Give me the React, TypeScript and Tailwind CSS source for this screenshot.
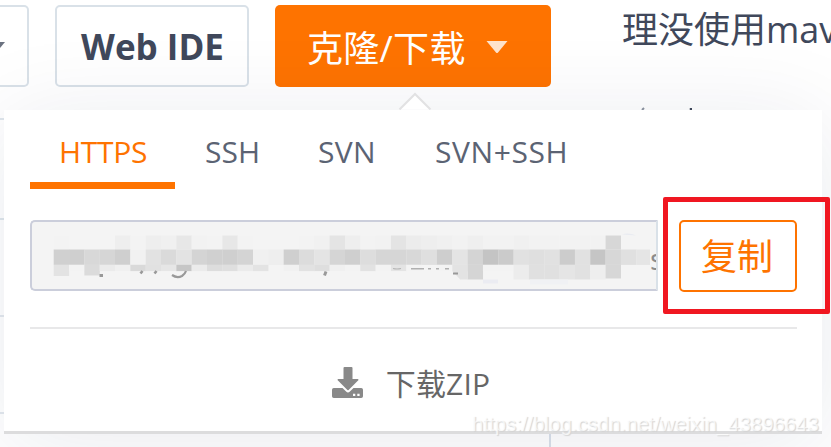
import React from "react";

// Each row: y, height and the grey level of every cell, left to right (0 = clear).
const CELL = 15.33;
const MOSAIC: { y: number; h: number; cells: number[] }[] = [
  {
    y: 15,
    h: 14,
    cells: [243, 0, 0, 0, 238, 243, 238, 240, 231, 242, 243, 231, 243, 0, 0, 0, 243, 241, 228, 238, 243, 242, 228, 236, 238, 240, 242, 239, 242, 242, 240, 242, 242, 242, 242, 242, 215, 0, 0],
  },
  {
    y: 29,
    h: 15.3,
    cells: [208, 207, 216, 214, 207, 241, 226, 218, 227, 212, 208, 207, 212, 240, 238, 207, 220, 228, 213, 207, 221, 214, 214, 216, 223, 206, 228, 212, 196, 203, 225, 223, 225, 204, 225, 197, 215, 224, 229],
  },
  {
    y: 44.3,
    h: 6.2,
    cells: [227, 243, 219, 235, 240, 217, 225, 230, 198, 235, 221, 223, 235, 227, 0, 241, 226, 222, 240, 243, 226, 243, 228, 243, 0, 243, 227, 213, 243, 243, 236, 224, 224, 229, 225, 238, 215, 0, 0],
  },
];
// Cells of the last row that reach further down.
const TAILS = [
  { c: 0, h: 5, v: 227 },
  { c: 2, h: 4.5, v: 219 },
  { c: 27, h: 8.5, v: 213 },
  { c: 30, h: 8.5, v: 236 },
  { c: 31, h: 8.5, v: 224 },
  { c: 32, h: 8.5, v: 224 },
  { c: 33, h: 8.5, v: 229 },
  { c: 34, h: 8.5, v: 225 },
  { c: 35, h: 8.5, v: 238 },
  { c: 36, h: 7.5, v: 215 },
];

function grey(v: number) {
  return `rgb(${v},${v},${v})`;
}

function MaskedUrl() {
  return (
    <svg width="618" height="68" viewBox="0 0 618 68" className="block shrink-0" aria-hidden="true">
      {MOSAIC.map((row) =>
        row.cells.map((v, i) =>
          v === 0 ? null : (
            <rect key={`${row.y}-${i}`} x={21.7 + i * CELL} y={row.y - 1.5} width={CELL + 0.1} height={row.h + 0.1} fill={grey(v)} />
          ),
        ),
      )}
      {TAILS.map((t) => (
        <rect key={t.c} x={21.7 + t.c * CELL} y={49} width={CELL + 0.1} height={t.h} fill={grey(t.v)} />
      ))}
      <path d="M420.300 49h15.400v8.500h-7.500z" fill={grey(227)} />
      <g fill="none" stroke="#999" strokeWidth="2">
        <path d="M67.5 53.5h3.5" strokeWidth="3" />
        <path d="M110.5 49l-2 2.5M124.5 49l-2 2.5" strokeWidth="2.6" />
        <path d="M140 53 Q145 56.5 150 54 Q153 52 154 49" strokeWidth="2.2" />
        <path d="M294 49.5l-1.5 4" strokeWidth="3" />
        <path d="M361 46.500 Q365 47.500 369 46.500" stroke="#b5b5b5" strokeWidth="1.2" />
        <path d="M379 46.700h13M396 46.700h3M404 46.700h3M413 46.700h4" stroke="#b0b0b0" strokeWidth="1.5" />
        <path d="M421 51.500h5" strokeWidth="2" />
      </g>
      <path d="M590 12.500 Q597 10 604 13.500 Z" fill="#e9ebf1" />
      <rect x="451" y="57.5" width="15" height="4" fill="#ebecf2" />
      <path d="M498 57.5h38v5h-38z" fill="#f0f1f4" />
    </svg>
  );
}

function DownloadIcon() {
  return (
    <svg width="32" height="32" viewBox="0 0 32 32" className="shrink-0" aria-hidden="true">
      <path
        fill="#898989"
        d="M12.5 0h7a1 1 0 0 1 1 1v11h5.300a.7.7 0 0 1 .5 1.200L16.600 23a.8.8 0 0 1-1.200 0L5.700 13.200a.7.7 0 0 1 .5-1.200h5.300V1a1 1 0 0 1 1-1z"
      />
      <path
        fill="#898989"
        fillRule="evenodd"
        d="M1.800 21h8.700l3.600 3.600a2.700 2.700 0 0 0 3.800 0l3.600-3.600h7.700a1.800 1.800 0 0 1 1.800 1.800v6.400a1.800 1.800 0 0 1-1.800 1.800H1.800A1.800 1.800 0 0 1 0 29.200v-6.400A1.800 1.800 0 0 1 1.800 21zM21 26.700v2.300h2.300v-2.300zM25.300 26.700v2.300h2.300v-2.300z"
      />
    </svg>
  );
}

const latin = "font-['Open_Sans','Noto_Sans_CJK_SC',sans-serif]";

export default function App() {
  return (
    <div className={`relative h-[447px] w-[831px] overflow-hidden bg-white ${latin}`}>
      <header className="flex h-[110px] items-start pt-[5px]">
        <div className="flex h-[82px] w-[29px] shrink-0 items-center rounded-r-[5px] border-2 border-l-0 border-[#d9e1e8]">
          <svg width="6" height="8" viewBox="0 0 6 8" className="-mt-[1px]" aria-hidden="true">
            <path d="M0 0h5L0 6z" fill="#6b7280" />
          </svg>
        </div>
        <button className="ml-[26px] flex h-[82px] w-[194px] shrink-0 items-center justify-center rounded-[5px] border-2 border-[#d9e1e8] pt-[3px] pl-px text-[35px] font-bold text-[#40485b]">
          <span className="whitespace-nowrap">Web IDE</span>
        </button>
        <button className="ml-[26px] flex h-[82px] w-[276px] shrink-0 items-center rounded-[5px] bg-[#fe7300] pl-[32px] text-[36px] text-white">
          <span className="whitespace-nowrap pt-[5px] tracking-[0.3px]">克隆/下载</span>
          <svg width="22" height="13" viewBox="0 0 22 13" className="ml-[20px] mt-[3px]" aria-hidden="true">
            <path d="M.5 0h21L12 11.500q-1 1-2 0z" fill="#ffe3cc" />
          </svg>
        </button>
        <div className="ml-[71px] mt-[2px] w-[210px] shrink-0 whitespace-nowrap text-[36px] leading-[46px] text-[#40485b]">
          理没使用mav
          <svg width="70" height="5" viewBox="0 0 70 5" className="mt-[54px] block" aria-hidden="true">
            <path d="M20 3l2-2" stroke="#8c93a0" strokeWidth="2" />
            <path d="M69 1v2" stroke="#40485b" strokeWidth="2.500" />
          </svg>
        </div>
      </header>

      <div className="flex h-[337px]">
        <div className="w-1 shrink-0 pt-2">
          <div className="h-[100px] border-t-2 border-[#dfe6ec]" />
          <div className="h-[97px] border-t-2 border-[#dfe6ec]" />
          <div className="h-[97px] border-t-2 border-[#e3e8ee]" />
          <div className="border-t-2 border-[#e3e8ee]" />
        </div>
        <div className="w-[818px]">
          <main className="relative h-[324px] border-b-[3px] border-[#dcdcdd] bg-white pl-[26px] shadow-[0_10px_90px_rgba(25,35,75,0.09)]">
            <svg width="34" height="18" viewBox="0 0 34 18" className="absolute -top-[18px] left-[394px]" aria-hidden="true">
              <path d="M1.500 17.500L17 2l15.500 15.500" fill="#fff" stroke="#e2e2e3" strokeWidth="2" />
            </svg>
            <nav className="flex h-[79px] text-[30px] leading-[40px] text-[#5b6373]">
              <div className="w-[145px] border-b-[7px] border-[#fe7300] pt-[22px] pl-px text-center tracking-[-0.3px] text-[#fe7300]">
                HTTPS
              </div>
              <div className="ml-[30px] w-[113px] pt-[22px]">SSH</div>
              <div className="w-[117px] pt-[22px] tracking-[0.3px]">SVN</div>
              <div className="whitespace-nowrap pt-[22px] tracking-[0.6px]">SVN+SSH</div>
            </nav>

            <section className="mt-[31px] flex">
              <div className="flex h-[71px] w-[628px] items-center overflow-hidden rounded-l-[5px] border-2 border-[#cbcedb] border-r-[#d9e1e8] bg-[#f4f4f4]">
                <MaskedUrl />
                <span className="mt-[6px] text-[30px] leading-[40px] text-[#8c8c8c]">s</span>
              </div>
              <button className="ml-[21px] flex h-[72px] w-[118px] items-center justify-center rounded-[5px] border-2 border-[#fe7300] pt-[2px] pr-[2px] text-[36px] text-[#fe7300]">
                <span className="whitespace-nowrap">复制</span>
              </button>
            </section>

            <section className="mt-[35px] flex h-[106px] w-[767px] items-center justify-center gap-[22px] border-t-2 border-[#e8e8e9] pt-[4px] pr-[5px] text-[30px] text-[#666]">
              <DownloadIcon />
              <span className="whitespace-nowrap tracking-[0.2px]">下载ZIP</span>
            </section>
          </main>
          <div className="h-[13px] w-[547px] border-r-2 border-[#dae1ea]" />
        </div>
      </div>

      <div className="absolute left-[663px] top-[197px] h-[117px] w-[167px] rounded-[2px] border-[5px] border-[#f01721]" />
      <div className="absolute left-[472px] top-[411px] whitespace-nowrap font-['Liberation_Sans',sans-serif] text-[20.400px] leading-[26px] text-white/70 [text-shadow:1px_1px_1px_#d4d4d4]">
        https://blog.csdn.net/weixin_43896643
      </div>
    </div>
  );
}
